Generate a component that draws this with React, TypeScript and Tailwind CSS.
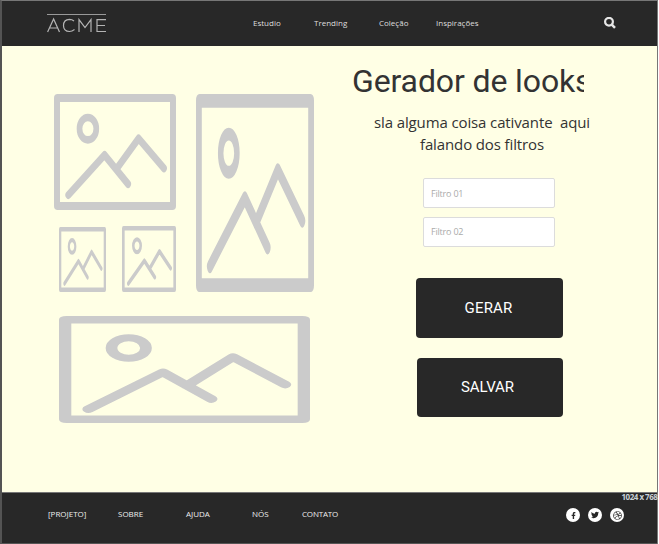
import { FaFacebookF, FaTwitter, FaDribbble } from "react-icons/fa";

const sans = "font-['Open_Sans','Noto_Sans',sans-serif]";

function Picture({ className }: { className: string }) {
  return (
    <svg viewBox="0 0 163 116" preserveAspectRatio="none" className={`block shrink-0 ${className}`}>
      <path fill="#cbcbcb" fillRule="evenodd" d="M5 0H158Q163 0 163 4V112Q163 116 158 116H5Q0 116 0 112V4Q0 0 5 0ZM8 8V108H155V8Z" />
      <g fill="none" stroke="#cbcbcb" strokeLinecap="round" strokeLinejoin="round">
        <circle cx="45.3" cy="34.7" r="11.2" strokeWidth="7.6" />
        <path strokeWidth="8" d="M19.2 101L67.500 61L98.900 90M83 75.500L113 44.500L146.800 74.300" />
      </g>
    </svg>
  );
}

function Header() {
  return (
    <header className="flex h-[45px] items-start bg-[#282828] text-[8px] leading-[12px] text-[#dedede]">
      <svg viewBox="0 0 60 20" className="ml-[45px] mt-[12px] h-5 w-[60px] shrink-0" fill="none" stroke="#b4b4b4" strokeWidth="1.2">
        <path stroke="#999" strokeWidth="1" d="M0 1.5H59" />
        <path d="M.6 19L6.600 6L12.500 19M3 15H10.500M27 8Q25 6.400 22.500 6.400Q16.500 6.700 16.500 12.500Q16.500 18.400 22.500 18.500Q25 18.500 27.500 16.500M32 19V6.600L38 14.500L44 6.600V19M59 6.600H50V18.500H59M50 12.500H58" />
      </svg>
      <nav className="mt-[16px] flex">
        <span className="ml-[146px] w-[61px]">Estudio</span>
        <span className="w-[65px]">Trending</span>
        <span className="w-[57px]">Coleção</span>
        <span className="w-[60px]">Inspirações</span>
      </nav>
      <svg viewBox="0 0 12 12" className="ml-[108px] mt-[16px] size-3" fill="none" stroke="#e6e6e6">
        <circle cx="5" cy="4.800" r="3.900" strokeWidth="2.200" />
        <path d="M7.800 7.600L11 10.800" strokeWidth="2.500" />
      </svg>
    </header>
  );
}

function Gallery() {
  return (
    <section className="w-[350px] shrink-0 pl-[52px] pt-[48px]">
      <div className="flex h-[198px] gap-5">
        <div className="flex w-[122px] flex-col justify-between">
          <Picture className="h-[116px] w-[122px]" />
          <div className="flex items-end justify-between pl-[5px]">
            <Picture className="h-[65px] w-[47px]" />
            <Picture className="h-[66px] w-[54px]" />
          </div>
        </div>
        <Picture className="h-[198px] w-[118px]" />
      </div>
      <Picture className="ml-[5px] mt-[24px] h-[107px] w-[251px]" />
    </section>
  );
}

function Generator() {
  return (
    <section className="flex w-[305px] flex-col items-start">
      <h1 className="mt-[16px] h-[38px] w-[232px] overflow-hidden whitespace-nowrap font-['Roboto',sans-serif] text-[32px] leading-[38px] tracking-[-0.12px] text-[#333]">Gerador de looks</h1>
      <p className="ml-[9px] mt-[11px] w-[242px] whitespace-pre text-center text-[15px] leading-[22px] tracking-[-0.12px] text-[#333]">{"sla alguma coisa cativante  aqui\nfalando dos filtros"}</p>
      <input aria-label="Filtro 01" placeholder="Filtro 01" className="ml-[71px] mt-[23px] h-[30px] w-[132px] rounded-[2px] border border-[#dcdcdc] bg-white px-[7px] text-[9px] tracking-[-0.2px] placeholder:text-[#aaa]" />
      <input aria-label="Filtro 02" placeholder="Filtro 02" className="ml-[71px] mt-[9px] h-[30px] w-[132px] rounded-[2px] border border-[#dcdcdc] bg-white px-[7px] pb-[2px] text-[9px] tracking-[-0.2px] placeholder:text-[#aaa]" />
      <button className="ml-[64px] mt-[31px] h-[60px] w-[147px] rounded bg-[#282828] pr-[2px] font-['Roboto',sans-serif] text-[15px] tracking-[0.2px] text-white">GERAR</button>
      <button className="ml-[65px] mt-[20px] h-[59px] w-[146px] rounded bg-[#282828] pr-[5px] font-['Roboto',sans-serif] text-[15px] tracking-[-0.1px] text-white">SALVAR</button>
    </section>
  );
}

function Footer() {
  return (
    <footer className="relative flex h-[52px] items-start border-y border-b-[#555] border-t-[#777] bg-[#282828] text-[8px] leading-[12px] text-[#eee]">
      <nav className="mt-[15px] flex w-[564px] shrink-0 pl-[46px]">
        <span className="w-[70px]">[PROJETO]</span>
        <span className="w-[68px]">SOBRE</span>
        <span className="w-[66px]">AJUDA</span>
        <span className="w-[50px]">NÓS</span>
        <span className="tracking-[-0.18px]">CONTATO</span>
      </nav>
      <div className="mt-[15px] flex gap-2 text-[#282828]">
        <span className="grid size-[14px] place-items-center rounded-full bg-white"><FaFacebookF className="size-[7px]" /></span>
        <span className="grid size-[14px] place-items-center rounded-full bg-white"><FaTwitter className="size-[8px]" /></span>
        <span className="grid size-[14px] place-items-center rounded-full bg-white"><FaDribbble className="size-[9px]" /></span>
      </div>
      <span className="absolute left-[619.5px] top-[-2px] whitespace-nowrap text-[8px] font-bold leading-[11px] tracking-[-0.5px] text-[#c8d0d5]">1024 x 768</span>
    </footer>
  );
}

export default function App() {
  return (
    <div className={`h-[544px] w-[659px] overflow-hidden bg-white ${sans}`}>
      <div className="w-[658px] border-l-2 border-r border-t border-l-[#545454] border-r-[#777] border-t-[#777] bg-[#ffffe5]">
        <Header />
        <main className="flex h-[446px]">
          <Gallery />
          <Generator />
        </main>
        <Footer />
      </div>
    </div>
  );
}
